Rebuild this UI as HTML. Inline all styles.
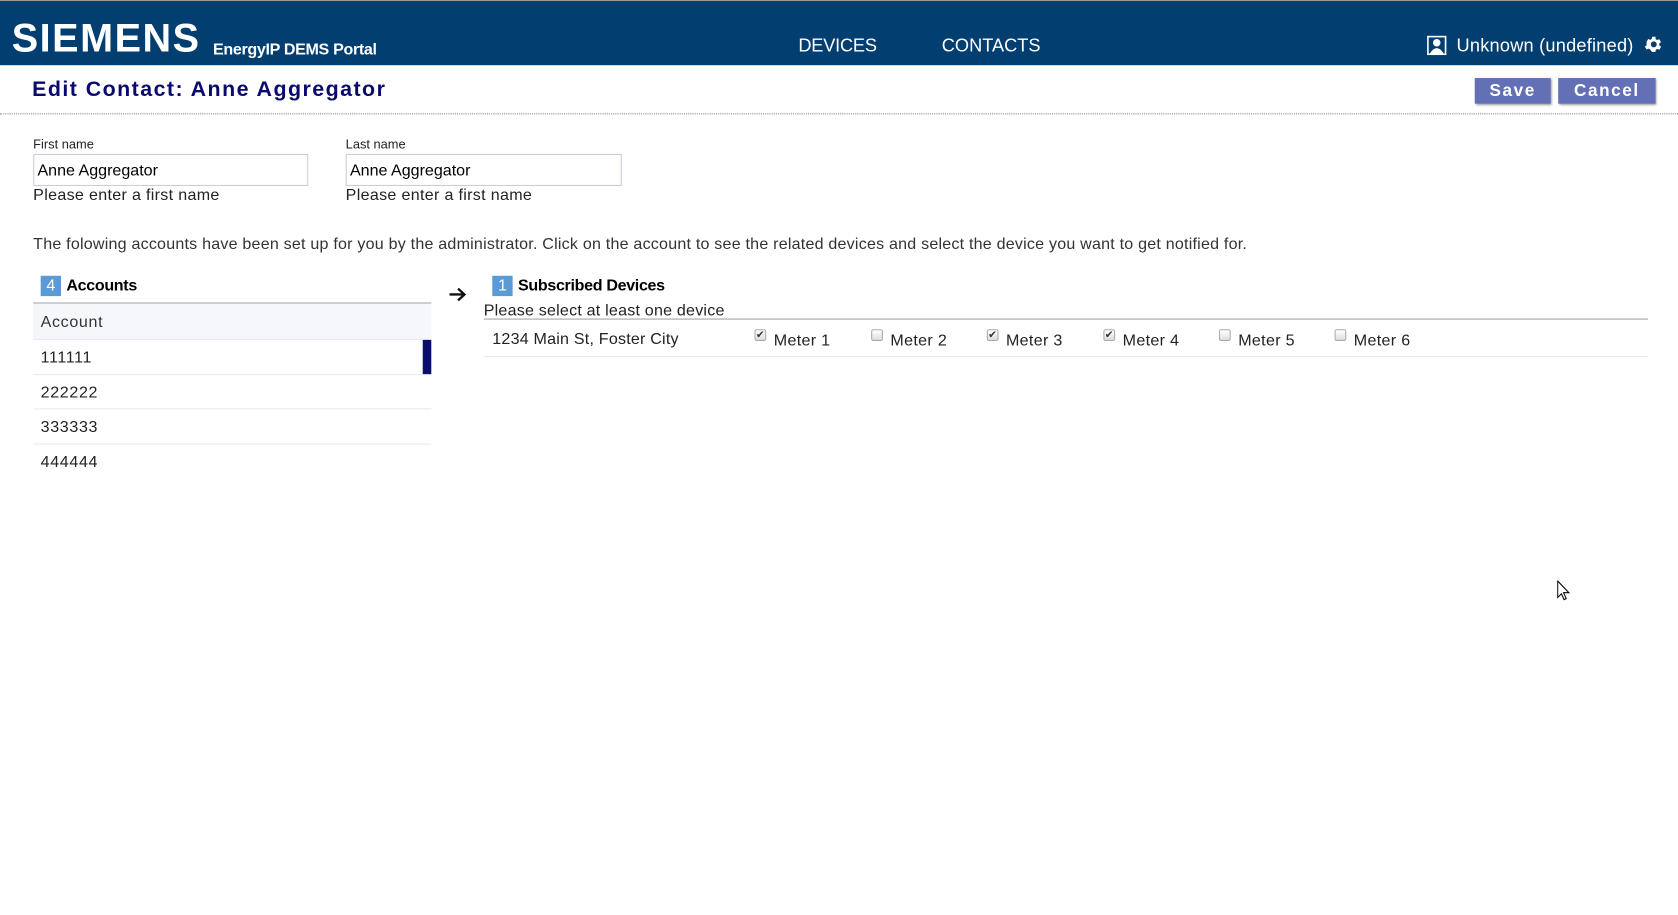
<!DOCTYPE html>
<html><head><meta charset="utf-8"><style>
html,body{margin:0;padding:0;background:#fff;overflow:hidden;width:1678px;height:915px}
#w{position:absolute;left:0;top:0;width:1568px;height:856px;transform:scale(1.0702,1.0689);transform-origin:0 0;font-family:"Liberation Sans",sans-serif;color:#222}
.a{position:absolute;white-space:nowrap}
#hdr{position:absolute;left:0;top:0;width:1568px;height:61px;background:#033e71;border-top:1px solid #999;box-sizing:border-box}
.cb{position:absolute;width:11px;height:11px;border:1px solid #aaa;border-radius:2px;background:linear-gradient(#fff,#ddd);box-sizing:border-box;font-size:10px;line-height:9px;text-align:center;color:#333}
.row{position:absolute;left:31px;width:372px;height:32px;border-bottom:1px solid #e8e8f0;font-size:15px;line-height:34px;padding-left:7px;box-sizing:border-box;letter-spacing:0.6px}
.btn{position:absolute;top:73px;height:24px;background:#6470b6;color:#fff;font-weight:bold;font-size:16px;letter-spacing:1.5px;text-align:center;line-height:25px;box-shadow:1px 1px 2px #999}
</style></head><body><div id="w">
<div id="hdr">
<div class="a" style="left:11px;top:14px;font-size:37px;font-weight:bold;color:#fff;letter-spacing:1.4px">SIEMENS</div>
<div class="a" style="left:199px;top:37px;font-size:15px;font-weight:bold;color:#fff;letter-spacing:-0.3px">EnergyIP DEMS Portal</div>
<div class="a" style="left:746px;top:32px;font-size:17px;color:#fff;letter-spacing:-0.2px">DEVICES</div>
<div class="a" style="left:880px;top:32px;font-size:17px;color:#fff">CONTACTS</div>
<svg class="a" style="left:1333px;top:32px" width="19" height="19" viewBox="0 0 19 19"><rect x="0.5" y="0.5" width="18" height="18" fill="#fff"/><rect x="2" y="2" width="15" height="15" fill="#033e71"/><circle cx="9.5" cy="7" r="3.5" fill="#fff"/><path d="M3 17 Q9.5 7 16 17Z" fill="#fff"/></svg>
<div class="a" style="left:1361px;top:32px;font-size:17px;color:#fff;letter-spacing:0.2px">Unknown (undefined)</div>
<svg class="a" style="left:1535px;top:31px" width="19" height="19" viewBox="0 0 24 24"><path fill="#fff" d="M19.4 13a7.5 7.5 0 000-2l2.1-1.6-2-3.5-2.5 1a7 7 0 00-1.7-1L15 3h-4l-.4 2.7a7 7 0 00-1.7 1l-2.5-1-2 3.5L4.6 11a7.5 7.5 0 000 2l-2.1 1.6 2 3.5 2.5-1a7 7 0 001.7 1L11 21h4l.4-2.7a7 7 0 001.7-1l2.5 1 2-3.5zM13 15.5a3.5 3.5 0 110-7 3.5 3.5 0 010 7z"/></svg>
</div>
<div class="a" style="left:30px;top:73px;font-size:20px;color:#0a0a6e;letter-spacing:1.35px;font-weight:bold">Edit Contact: Anne Aggregator</div>
<div class="btn" style="left:1378px;width:71px">Save</div>
<div class="btn" style="left:1456px;width:91px">Cancel</div>
<div class="a" style="left:0;top:106px;width:1568px;border-top:1px dotted #888"></div>
<div class="a" style="left:31px;top:128px;font-size:12px">First name</div>
<div class="a" style="left:31px;top:144px;width:257px;height:30px;border:1px solid #ccd;box-sizing:border-box;font-size:15px;line-height:30px;padding-left:3px;color:#000">Anne Aggregator</div>
<div class="a" style="left:31px;top:174px;font-size:15px;letter-spacing:0.3px">Please enter a first name</div>
<div class="a" style="left:323px;top:128px;font-size:12px">Last name</div>
<div class="a" style="left:323px;top:144px;width:258px;height:30px;border:1px solid #ccd;box-sizing:border-box;font-size:15px;line-height:30px;padding-left:3px;color:#000">Anne Aggregator</div>
<div class="a" style="left:323px;top:174px;font-size:15px;letter-spacing:0.3px">Please enter a first name</div>
<div class="a" style="left:31px;top:220px;font-size:15px;color:#333;letter-spacing:0.2px">The folowing accounts have been set up for you by the administrator. Click on the account to see the related devices and select the device you want to get notified for.</div>
<div class="a" style="left:38px;top:258px;width:19px;height:19px;background:#5b9bd5;color:#fff;font-size:15px;text-align:center;line-height:20px">4</div>
<div class="a" style="left:62px;top:259px;font-size:15px;font-weight:bold;color:#000;letter-spacing:-0.3px">Accounts</div>
<div class="a" style="left:31px;top:283px;width:372px;border-top:1px solid #a0a0b0"></div>
<div class="row" style="top:284px;height:34px;background:#f6f7fb;line-height:36px;color:#333">Account</div>
<div class="row" style="top:318px;height:33px">111111<div style="position:absolute;right:0;top:0;width:8px;height:32px;background:#0a0f6e"></div></div>
<div class="row" style="top:351px">222222</div>
<div class="row" style="top:383px;height:33px">333333</div>
<div class="row" style="top:416px;border:none">444444</div>
<svg class="a" style="left:419px;top:268px" width="18" height="15" viewBox="0 0 18 15"><path d="M1 7.5H15M9 2l6 5.5-6 5.5" fill="none" stroke="#111" stroke-width="2.2"/></svg>
<div class="a" style="left:460px;top:258px;width:19px;height:19px;background:#5b9bd5;color:#fff;font-size:15px;text-align:center;line-height:20px">1</div>
<div class="a" style="left:484px;top:259px;font-size:15px;font-weight:bold;color:#000;letter-spacing:-0.3px">Subscribed Devices</div>
<div class="a" style="left:452px;top:282px;font-size:15px;letter-spacing:0.2px">Please select at least one device</div>
<div class="a" style="left:452px;top:298px;width:1088px;border-top:1px solid #a0a0b0"></div>
<div class="a" style="left:452px;top:333px;width:1088px;border-top:1px solid #e8e8f2"></div>
<div class="a" style="left:460px;top:309px;font-size:15px;letter-spacing:0.2px">1234 Main St, Foster City</div>
<div class="cb" style="left:705px;top:308px">✔</div><div class="a" style="left:723px;top:310px;font-size:15px;letter-spacing:0.3px">Meter 1</div>
<div class="cb" style="left:814px;top:308px"></div><div class="a" style="left:832px;top:310px;font-size:15px;letter-spacing:0.3px">Meter 2</div>
<div class="cb" style="left:922px;top:308px">✔</div><div class="a" style="left:940px;top:310px;font-size:15px;letter-spacing:0.3px">Meter 3</div>
<div class="cb" style="left:1031px;top:308px">✔</div><div class="a" style="left:1049px;top:310px;font-size:15px;letter-spacing:0.3px">Meter 4</div>
<div class="cb" style="left:1139px;top:308px"></div><div class="a" style="left:1157px;top:310px;font-size:15px;letter-spacing:0.3px">Meter 5</div>
<div class="cb" style="left:1247px;top:308px"></div><div class="a" style="left:1265px;top:310px;font-size:15px;letter-spacing:0.3px">Meter 6</div>
<svg class="a" style="left:1455px;top:543px" width="12" height="19" viewBox="0 0 12 19"><path d="M0.5 0.5V16l3.5-3.5 2.5 5.5 2-1-2.5-5.5H11Z" fill="#fff" stroke="#000"/></svg>
</div></body></html>
